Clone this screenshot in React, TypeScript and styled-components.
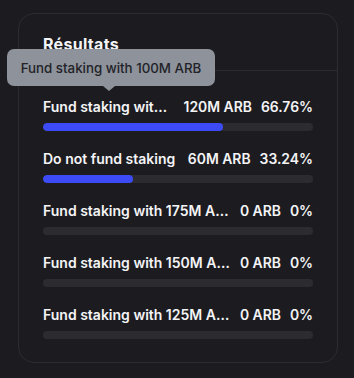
import React from "react";
import styled, { createGlobalStyle } from "styled-components";

type Result = {
  label: string;
  amount: string;
  percent: number;
  percentText: string;
};

const results: Result[] = [
  { label: "Fund staking with 100M ARB", amount: "120M ARB", percent: 66.76, percentText: "66.76%" },
  { label: "Do not fund staking", amount: "60M ARB", percent: 33.24, percentText: "33.24%" },
  { label: "Fund staking with 175M ARB", amount: "0 ARB", percent: 0, percentText: "0%" },
  { label: "Fund staking with 150M ARB", amount: "0 ARB", percent: 0, percentText: "0%" },
  { label: "Fund staking with 125M ARB", amount: "0 ARB", percent: 0, percentText: "0%" },
];

function App() {
  return (
    <>
      <GlobalStyle />
      <Page>
        <Card>
          <Header>
            <Title>Résultats</Title>
          </Header>
          <List>
            {results.map((r) => (
              <Row key={r.label}>
                <RowText>
                  <Label>{r.label}</Label>
                  <Amount>{r.amount}</Amount>
                  <Amount>{r.percentText}</Amount>
                </RowText>
                <Track>
                  <Fill style={{ width: `${r.percent}%` }} />
                </Track>
              </Row>
            ))}
          </List>
          <Tooltip>Fund staking with 100M ARB</Tooltip>
        </Card>
      </Page>
    </>
  );
}

const GlobalStyle = createGlobalStyle`
  body {
    margin: 0;
    background: #1c1c20;
    font-family: Inter, "Noto Sans", sans-serif;
    -webkit-font-smoothing: antialiased;
  }
`;

const Page = styled.div`
  width: 354px;
  height: 378px;
  padding: 13px 0 0 18px;
  box-sizing: border-box;
`;

const Card = styled.div`
  position: relative;
  width: 320px;
  height: 350px;
  box-sizing: border-box;
  border: 1px solid #2c2c31;
  border-radius: 16px;
  background: #1c1c20;
`;

const Header = styled.div`
  height: 57px;
  box-sizing: border-box;
  padding: 20px 24px 0;
  border-bottom: 1px solid #2c2c31;
`;

const Title = styled.h2`
  margin: 0;
  font-size: 16px;
  font-weight: 700;
  letter-spacing: 0.3px;
  color: #f4f4f6;
  line-height: 20px;
`;

const List = styled.div`
  display: flex;
  flex-direction: column;
  gap: 18px;
  padding: 26px 24px 0;
`;

const Row = styled.div`
  display: flex;
  flex-direction: column;
  gap: 6px;
`;

const RowText = styled.div`
  display: flex;
  align-items: center;
  gap: 9px;
  font-size: 13.9px;
  font-weight: 600;
  line-height: 20px;
  color: #f4f4f6;
`;

const Label = styled.span`
  flex: 1;
  min-width: 0;
  font-size: 14px;
  white-space: nowrap;
  overflow: hidden;
  text-overflow: ellipsis;
`;

const Amount = styled.span`
  flex-shrink: 0;
  white-space: nowrap;
`;

const Track = styled.div`
  height: 8px;
  border-radius: 4px;
  background: #2c2c30;
  overflow: hidden;
`;

const Fill = styled.div`
  height: 100%;
  border-radius: 4px;
  background: #3d4bf6;
`;

const Tooltip = styled.div`
  position: absolute;
  left: -12px;
  top: 35px;
  width: 208px;
  height: 37px;
  box-sizing: border-box;
  display: flex;
  align-items: center;
  justify-content: center;
  border-radius: 7px;
  background: #8d929b;
  color: #222227;
  font-size: 13.3px;
  font-weight: 500;
  white-space: nowrap;

  &::after {
    content: "";
    position: absolute;
    left: 96px;
    bottom: -5px;
    border-left: 6px solid transparent;
    border-right: 6px solid transparent;
    border-top: 5px solid #8d929b;
  }
`;

export default App;
